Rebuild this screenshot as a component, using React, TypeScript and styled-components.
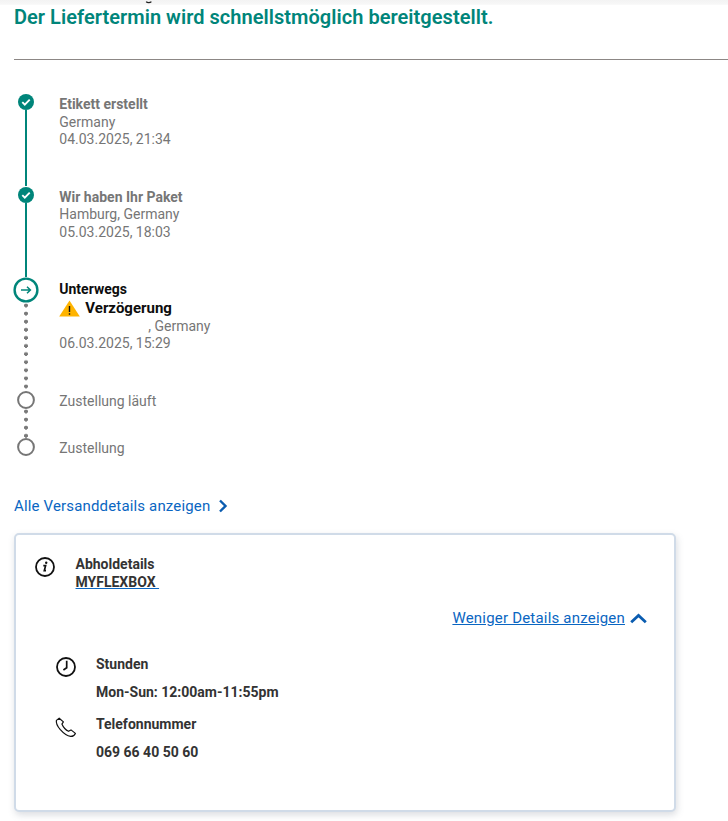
import React from "react";
import styled, { createGlobalStyle } from "styled-components";

const Global = createGlobalStyle`
  html, body { margin: 0; padding: 0; background: #fff; }
  body { font-family: Roboto, "Liberation Sans", sans-serif; width: 728px; height: 821px; overflow: hidden; }
`;

const Page = styled.div`
  width: 728px;
  height: 821px;
  display: flex;
  flex-direction: column;
  overflow: hidden;
`;

const TopStrip = styled.div`
  height: 5px;
  flex: none;
  padding-left: 145px;
  background: linear-gradient(#f3f3f3, #f7f7f7 80%, #fbfbfb);
`;

const Content = styled.div`
  padding-left: 14px;
  display: flex;
  flex-direction: column;
`;

const Title = styled.h1`
  margin: 0;
  height: 24px;
  font-size: 20px;
  line-height: 24px;
  font-weight: 600;
  letter-spacing: 0.04px;
  color: #00857a;
  white-space: nowrap;
`;

const Rule = styled.hr`
  margin: 30px 0 0;
  border: 0;
  height: 1px;
  background: #8c8785;
`;

const Timeline = styled.ol`
  list-style: none;
  margin: 33px 0 0;
  padding: 0;
  display: flex;
  flex-direction: column;
`;

const Step = styled.li<{ $height: number }>`
  display: flex;
  height: ${(p) => p.$height}px;
`;

const Rail = styled.div`
  width: 24px;
  flex: none;
  display: flex;
  flex-direction: column;
  align-items: center;
`;

const Connector = styled.div<{ $kind: "solid" | "dots" }>`
  flex: 1;
  ${(p) =>
    p.$kind === "solid"
      ? "background: #00857a; width: 2px;"
      : "width: 4px; background: radial-gradient(circle at 2px 2.4px, #7a7a7a 1.7px, transparent 2.1px) 0 0 / 4px 8.1px repeat-y;"}
`;

const StepText = styled.div<{ $top: number }>`
  margin-left: 21.3px;
  padding-top: ${(p) => p.$top}px;
  font-size: 14px;
  line-height: 17.5px;
  color: #767676;
`;

const StepTitle = styled.div<{ $active?: boolean }>`
  font-weight: 700;
  color: ${(p) => (p.$active ? "#0d0d0d" : "#767676")};
`;

const Delay = styled.div`
  display: flex;
  align-items: center;
  gap: 5px;
  font-size: 15px;
  line-height: 19px;
  font-weight: 700;
  color: #0d0d0d;
`;

const Redacted = styled.span`
  padding-left: 89px;
`;

const DetailsLink = styled.a`
  margin-top: 11px;
  display: flex;
  align-items: center;
  gap: 8px;
  height: 20px;
  font-size: 15px;
  letter-spacing: 0.16px;
  color: #0a66c2;
`;

const Card = styled.section`
  box-sizing: border-box;
  width: 662px;
  height: 279px;
  margin-top: 17px;
  border: 2px solid #d0dbe8;
  border-radius: 5px;
  background: #fff;
  box-shadow: 1px 3px 7px rgba(90, 100, 120, 0.22);
  display: flex;
  flex-direction: column;
  padding: 20px 27px 0 18px;
`;

const PickupRow = styled.div`
  display: flex;
  gap: 19.5px;
`;

const IconSlot = styled.div`
  width: 22px;
  flex: none;
  display: flex;
  justify-content: center;
  padding-top: 2px;
`;

const PickupText = styled.div`
  font-size: 14px;
  line-height: 18px;
  font-weight: 700;
  color: #333;
`;

const Flexbox = styled.a`
  display: block;
  width: max-content;
  color: #333;
  white-space: pre;
  text-decoration: underline;
  text-decoration-color: #0a66c2;
`;

const Toggle = styled.div`
  margin-top: 17px;
  align-self: flex-end;
  display: flex;
  align-items: center;
  gap: 5px;
  height: 20px;
  font-size: 15px;
  letter-spacing: 0.2px;
  color: #0a66c2;
`;

const ToggleLabel = styled.a`
  text-decoration: underline;
`;

const Facts = styled.div`
  margin: 27px 0 0 20.5px;
  display: flex;
  flex-direction: column;
  gap: 14px;
`;

const Fact = styled.div`
  display: flex;
  gap: 19.5px;
`;

const FactBody = styled.div`
  display: flex;
  flex-direction: column;
  gap: 10px;
  font-size: 14px;
  line-height: 18px;
  font-weight: 700;
  color: #333;
`;

const Descender = () => (
  <svg width="8" height="5" viewBox="0 0 8 5" style={{ display: "block" }}>
    <path d="M1.2 1.6c1 1.3 4 1.3 5.2 0" fill="none" stroke="#222" strokeWidth="1.3" />
  </svg>
);

const Check = ({ top = 0 }: { top?: number }) => (
  <svg width="16" height="16" viewBox="0 0 16 16" style={{ flex: "none", marginTop: top }}>
    <circle cx="8" cy="8" r="8" fill="#00857a" />
    <path d="M4.3 8.2l2.5 2.5 4.9-5" fill="none" stroke="#fff" strokeWidth="1.9" />
  </svg>
);

const Arrow = () => (
  <svg width="26" height="26" viewBox="0 0 26 26" style={{ flex: "none" }}>
    <circle cx="13" cy="13" r="11.4" fill="#fff" stroke="#00857a" strokeWidth="2.4" />
    <path d="M8 13h9.5M14 9.8l3.4 3.2-3.4 3.2" fill="none" stroke="#00857a" strokeWidth="1.5" />
  </svg>
);

const Ring = () => (
  <svg width="18" height="18" viewBox="0 0 18 18" style={{ flex: "none" }}>
    <circle cx="9" cy="9" r="7.9" fill="#fff" stroke="#767676" strokeWidth="2" />
  </svg>
);

const Warning = () => (
  <svg width="21" height="17" viewBox="0 0 21 17">
    <path d="M10.5 0.5L20.8 16.5H0.2z" fill="#ffb400" />
    <path d="M10.5 6v6M10.5 13.2v1.6" stroke="#111" strokeWidth="1.4" />
  </svg>
);

const ChevronRight = () => (
  <svg width="10" height="14" viewBox="0 0 10 14">
    <path d="M2 1.5L7.5 7 2 12.5" fill="none" stroke="#0a5cb0" strokeWidth="2.4" />
  </svg>
);

const ChevronUp = () => (
  <svg width="17" height="11" viewBox="0 0 17 11">
    <path d="M1.2 9.2L8.5 2.4l7.3 6.8" fill="none" stroke="#0a5cb0" strokeWidth="2.8" />
  </svg>
);

const InfoIcon = () => (
  <svg width="20" height="20" viewBox="0 0 20 20">
    <circle cx="10" cy="10" r="9" fill="none" stroke="#111" strokeWidth="1.8" />
    <path d="M8.3 8.6h2.3l-1.3 5.1h1.7" fill="none" stroke="#111" strokeWidth="1.7" />
    <circle cx="11.2" cy="5.7" r="1.2" fill="#111" />
  </svg>
);

const ClockIcon = () => (
  <svg width="20" height="20" viewBox="0 0 20 20">
    <circle cx="10" cy="10" r="9" fill="none" stroke="#111" strokeWidth="1.8" />
    <path d="M10.7 3.8v6.9L7.4 13" fill="none" stroke="#111" strokeWidth="1.7" />
  </svg>
);

const PhoneIcon = () => (
  <svg width="22" height="21" viewBox="0 0 22 21">
    <path
      d="M4.2 1.2L1.4 3.4c-.5 2.6 1 5.8 3.7 9 3 3.4 6.6 6.6 10.5 7 1.6.1 3.8-1 4.8-3l-4.4-3.5-2.5 1.4c-2.5-1-5.4-4.4-6.6-7.2l1.5-2.2z"
      fill="none"
      stroke="#111"
      strokeWidth="1.2"
      strokeLinejoin="round"
    />
  </svg>
);

export default function App() {
  return (
    <Page>
      <Global />
      <TopStrip>
        <Descender />
      </TopStrip>
      <Content>
        <Title>Der Liefertermin wird schnellstmöglich bereitgestellt.</Title>
        <Rule />
        <Timeline>
          <Step $height={93}>
            <Rail>
              <Check top={1} />
              <Connector $kind="solid" />
            </Rail>
            <StepText $top={3}>
              <StepTitle>Etikett erstellt</StepTitle>
              Germany
              <br />
              04.03.2025, 21:34
            </StepText>
          </Step>
          <Step $height={91}>
            <Rail>
              <Check top={1} />
              <Connector $kind="solid" />
            </Rail>
            <StepText $top={2.7}>
              <StepTitle>Wir haben Ihr Paket</StepTitle>
              Hamburg, Germany
              <br />
              05.03.2025, 18:03
            </StepText>
          </Step>
          <Step $height={114}>
            <Rail>
              <Arrow />
              <Connector $kind="dots" />
            </Rail>
            <StepText $top={4}>
              <StepTitle $active>Unterwegs</StepTitle>
              <Delay>
                <Warning />
                Verzögerung
              </Delay>
              <Redacted>, Germany</Redacted>
              <br />
              06.03.2025, 15:29
            </StepText>
          </Step>
          <Step $height={47}>
            <Rail>
              <Ring />
              <Connector $kind="dots" />
            </Rail>
            <StepText $top={2}>Zustellung läuft</StepText>
          </Step>
          <Step $height={47}>
            <Rail>
              <Ring />
            </Rail>
            <StepText $top={2}>Zustellung</StepText>
          </Step>
        </Timeline>
        <DetailsLink>
          Alle Versanddetails anzeigen
          <ChevronRight />
        </DetailsLink>
        <Card>
          <PickupRow>
            <IconSlot>
              <InfoIcon />
            </IconSlot>
            <PickupText>
              Abholdetails
              <Flexbox>MYFLEXBOX </Flexbox>
            </PickupText>
          </PickupRow>
          <Toggle>
            <ToggleLabel>Weniger Details anzeigen</ToggleLabel>
            <ChevronUp />
          </Toggle>
          <Facts>
            <Fact>
              <IconSlot>
                <ClockIcon />
              </IconSlot>
              <FactBody>
                <span>Stunden</span>
                <span>Mon-Sun: 12:00am-11:55pm</span>
              </FactBody>
            </Fact>
            <Fact>
              <IconSlot>
                <PhoneIcon />
              </IconSlot>
              <FactBody>
                <span>Telefonnummer</span>
                <span>069 66 40 50 60</span>
              </FactBody>
            </Fact>
          </Facts>
        </Card>
      </Content>
    </Page>
  );
}
